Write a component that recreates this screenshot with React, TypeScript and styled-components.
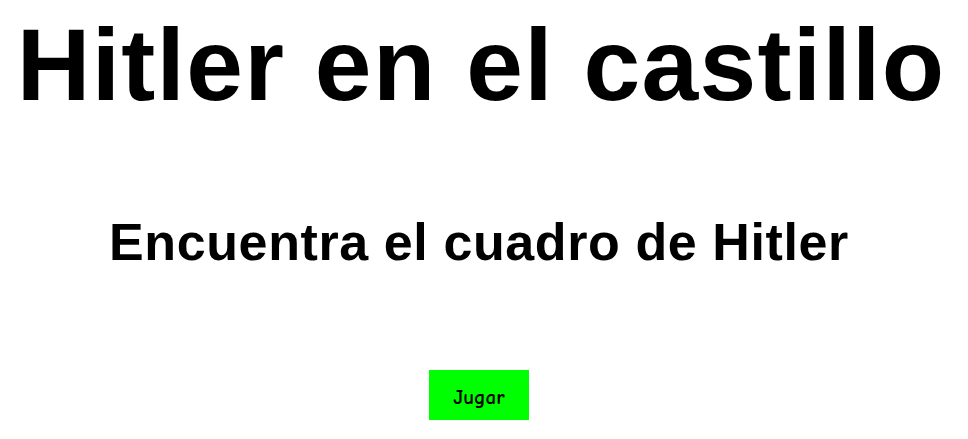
import styled, { createGlobalStyle } from "styled-components";

const Global = createGlobalStyle`
  html, body {
    margin: 0;
    padding: 0;
    background: #ffffff;
  }
`;

const Page = styled.main`
  display: flex;
  flex-direction: column;
  align-items: center;
  width: 958px;
  height: 439px;
`;

const Title = styled.h1`
  margin: 14px 0 0 4px;
  font-family: "Liberation Sans", Arial, Helvetica, sans-serif;
  font-weight: bold;
  font-size: 102px;
  line-height: 1;
  letter-spacing: 1.3px;
  color: #000;
  white-space: nowrap;
`;

const Subtitle = styled.h2`
  margin: 100px 0 0 0;
  font-family: "Liberation Sans", Arial, Helvetica, sans-serif;
  font-weight: bold;
  font-size: 52px;
  line-height: 1;
  letter-spacing: 0.6px;
  color: #000;
  white-space: nowrap;
`;

const PlayButton = styled.button`
  margin-top: 102px;
  width: 100px;
  height: 50px;
  padding: 3px 0 0 0;
  border: none;
  background: #00ff00;
  font-family: "Comic Sans MS", "Comic Neue", cursive;
  font-weight: bold;
  font-size: 21px;
  color: #000;
  cursor: pointer;
`;

export default function App() {
  return (
    <>
      <Global />
      <Page>
        <Title>Hitler en el castillo</Title>
        <Subtitle>Encuentra el cuadro de Hitler</Subtitle>
        <PlayButton>Jugar</PlayButton>
      </Page>
    </>
  );
}
